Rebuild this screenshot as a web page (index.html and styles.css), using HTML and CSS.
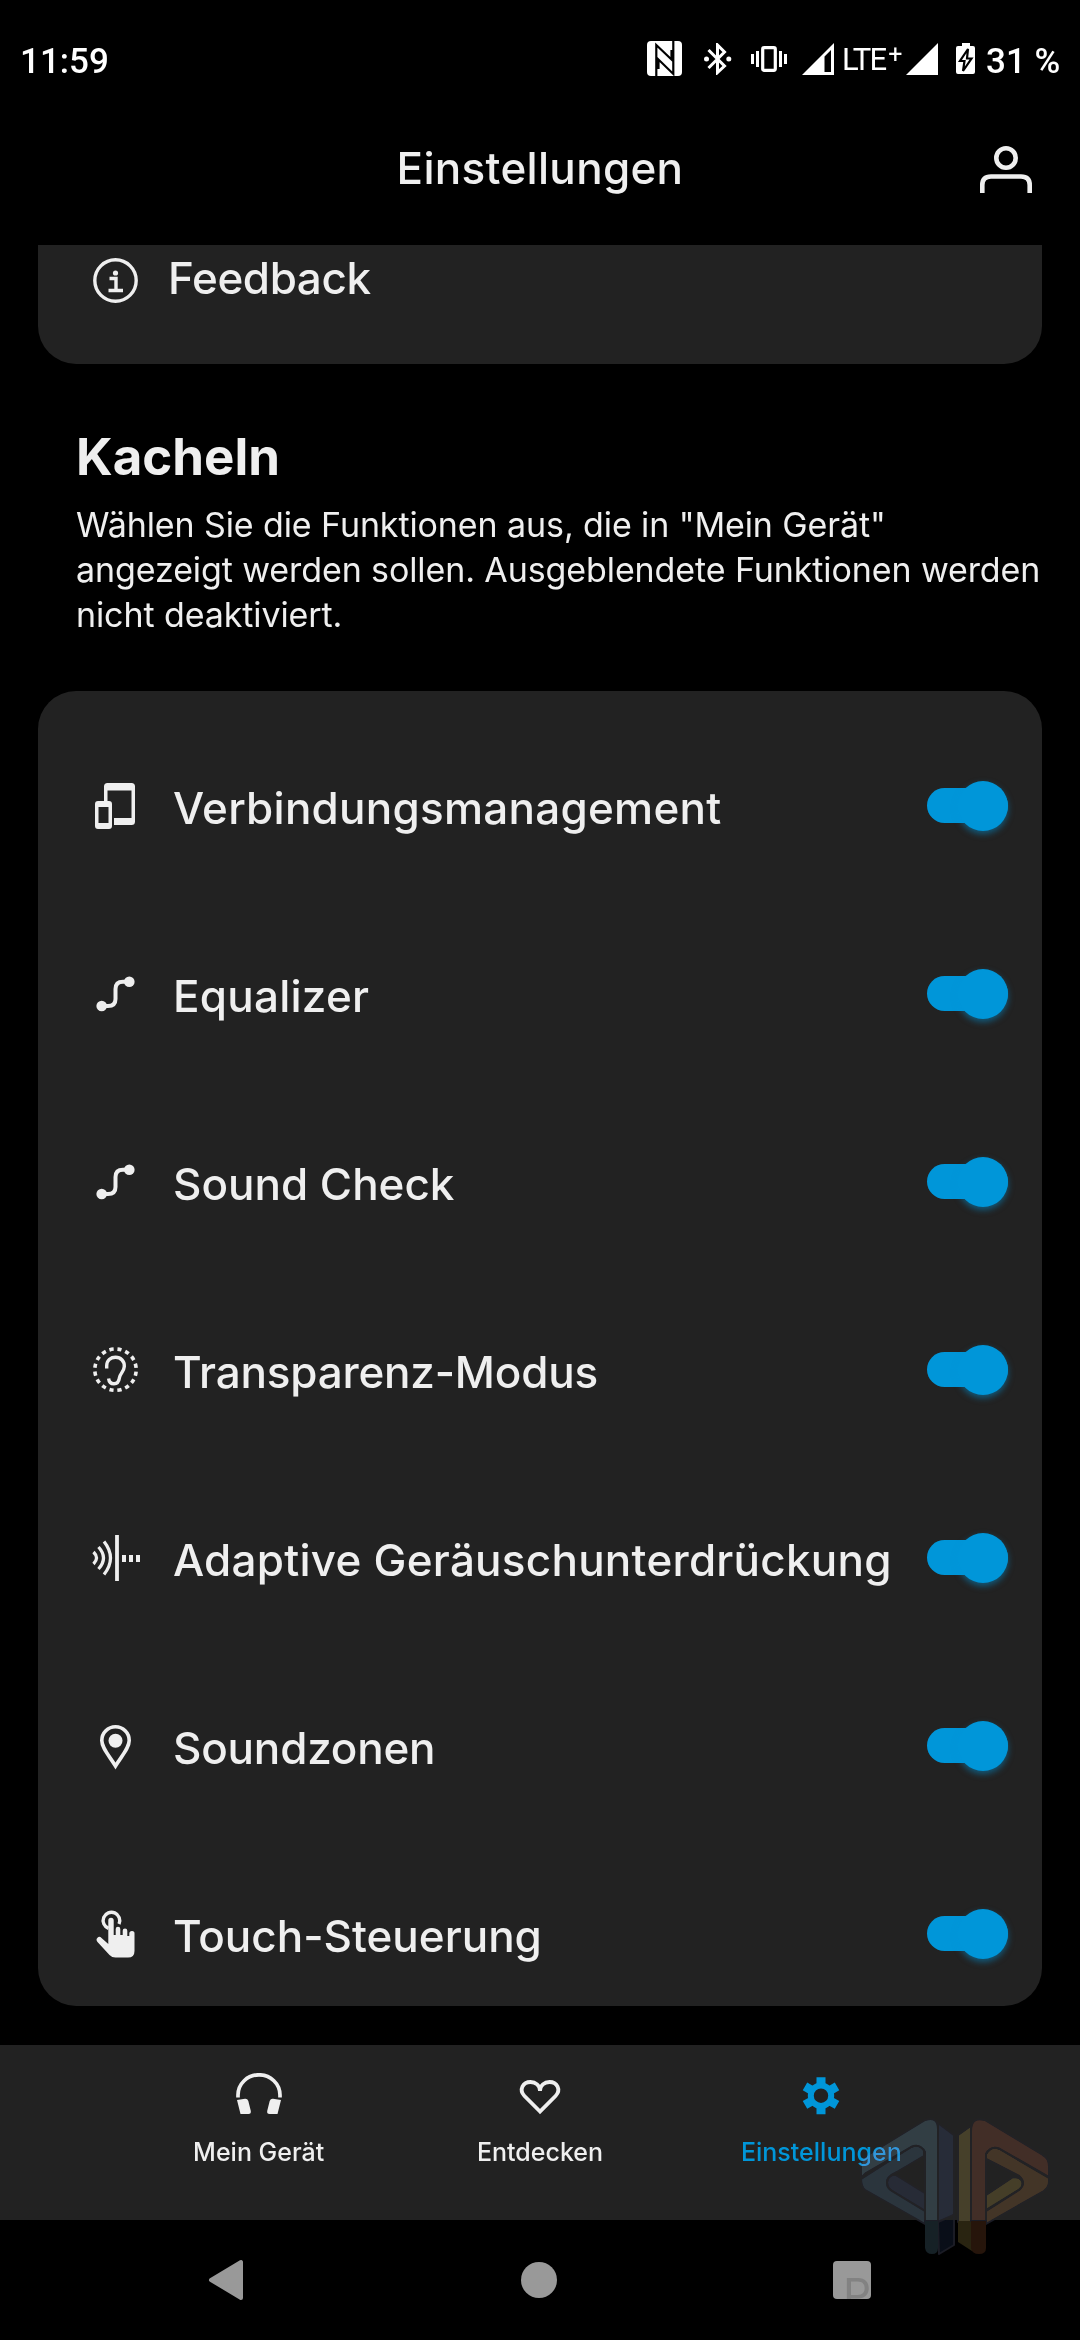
FILE: index.html
```html
<!DOCTYPE html>
<html lang="de">
<head>
    <meta charset="UTF-8">
    <meta name="viewport" content="width=device-width, initial-scale=1.0">
    <title>Einstellungen</title>
    <link rel="stylesheet" href="styles.css">
</head>
<body>

    <!-- Status bar -->
    <div class="statusbar">
        <span class="time">11:59</span>
        <div class="status-icons">
            <svg class="nfc" width="36" height="36" viewBox="0 0 36 36">
                <rect x="0" y="0" width="35" height="35" rx="4" fill="#fff"/>
                <path d="M9.300 35V4L24.500 18.500V9M26.300 0V33L11.500 18.500V28" fill="none" stroke="#000" stroke-width="2.200"/>
            </svg>
            <svg class="bt" width="28" height="32" viewBox="0 0 28 32">
                <path d="M4.500 7L20.500 23L13.500 29.500V2L20.500 9L4.500 25" fill="none" stroke="#fff" stroke-width="3"/>
                <circle cx="2.500" cy="16" r="2.500" fill="#fff"/>
                <circle cx="24.800" cy="16" r="2.500" fill="#fff"/>
            </svg>
            <svg class="vibrate" width="36" height="26" viewBox="0 0 36 26">
                <rect x="11.700" y="1.700" width="12.600" height="22.600" rx="1.500" fill="none" stroke="#fff" stroke-width="3.200"/>
                <path d="M1.500 8V18M6.500 5V21M29.500 5V21M34.500 8V18" stroke="#fff" stroke-width="3"/>
            </svg>
            <svg class="signal" width="32" height="32" viewBox="0 0 32 32">
                <path d="M0 32L32 0V32ZM22.500 13.500V29H29V7Z" fill="#fff" fill-rule="evenodd"/>
            </svg>
            <span class="lte">LTE<span class="plus">+</span></span>
            <svg class="signal2" width="32" height="32" viewBox="0 0 32 32">
                <path d="M0 32L32 0V32Z" fill="#fff"/>
            </svg>
            <svg class="battery" width="20" height="32" viewBox="0 0 20 32">
                <path d="M6 0H14V3H17Q19 3 19 5V29Q19 31 17 31H2Q0 31 0 29V5Q0 3 2 3H6Z" fill="#fff"/>
                <path d="M12 6L4 18H8.500L7 28L15.500 15.500H11Z" fill="#fff" stroke="#000" stroke-width="2.200"/>
            </svg>
            <span class="percent">31 %</span>
        </div>
    </div>

    <!-- Header -->
    <header class="header">
        <h1>Einstellungen</h1>
        <svg class="profile" width="52" height="48" viewBox="0 0 52 48">
            <g fill="none" stroke="#efefef" stroke-width="4.600">
                <circle cx="26" cy="12" r="9.700"/>
                <path d="M2.300 47V39Q2.300 30.500 11 30.500H41Q49.700 30.500 49.700 39V47"/>
            </g>
        </svg>
    </header>

    <main class="content">
        <div class="card feedback">
            <svg class="icon" viewBox="0 0 46 46">
                <circle cx="22.500" cy="22.500" r="20.700" fill="none" stroke="#efefef" stroke-width="3.400"/>
                <circle cx="22.500" cy="15" r="2.600" fill="#efefef"/>
                <path d="M16.500 20.500H23V32M15.500 32.500H30" fill="none" stroke="#efefef" stroke-width="3.400"/>
            </svg>
            <span class="label">Feedback</span>
        </div>

        <section class="intro">
            <h2>Kacheln</h2>
            <p>Wählen Sie die Funktionen aus, die in "Mein Gerät"<br>angezeigt werden sollen. Ausgeblendete Funktionen werden<br>nicht deaktiviert.</p>
        </section>

        <div class="card tiles">
            <div class="row">
                <svg class="icon" viewBox="0 0 46 46">
                    <path d="M11 18V3.500Q11 0 14.500 0H38.500Q42 0 42 3.500V38.500Q42 42 38.500 42H21V35H38.500V7.500H14.500V18Z" fill="#efefef"/>
                    <path d="M5 18H16Q19 18 19 21V43Q19 46 16 46H5Q2 46 2 43V21Q2 18 5 18ZM5.500 24V40H15.500V24Z" fill="#efefef" fill-rule="evenodd"/>
                </svg>
                <span class="label wide">Verbindungsmanagement</span>
                <span class="toggle"></span>
            </div>
            <div class="row">
                <svg class="icon" viewBox="0 0 46 46">
                    <path d="M8.700 35H15Q22.500 35 22.500 28V18Q22.500 10.700 30 10.700H36.300" fill="none" stroke="#efefef" stroke-width="4"/>
                    <circle cx="8.700" cy="35" r="5.300" fill="#efefef"/>
                    <circle cx="36.300" cy="10.700" r="5.300" fill="#efefef"/>
                </svg>
                <span class="label wide">Equalizer</span>
                <span class="toggle"></span>
            </div>
            <div class="row">
                <svg class="icon" viewBox="0 0 46 46">
                    <path d="M8.700 35H15Q22.500 35 22.500 28V18Q22.500 10.700 30 10.700H36.300" fill="none" stroke="#efefef" stroke-width="4"/>
                    <circle cx="8.700" cy="35" r="5.300" fill="#efefef"/>
                    <circle cx="36.300" cy="10.700" r="5.300" fill="#efefef"/>
                </svg>
                <span class="label">Sound Check</span>
                <span class="toggle"></span>
            </div>
            <div class="row">
                <svg class="icon" viewBox="0 0 46 46">
                    <g fill="none" stroke="#efefef">
                        <circle cx="22.500" cy="22.700" r="20.700" stroke-width="3.600" pathLength="16" stroke-dasharray=".52 .48" transform="rotate(5.400 22.500 22.700)"/>
                        <path d="M13.700 21.500V18.500C14 13 18 10.300 22.500 10.300C28 10.300 31.600 14.500 31.300 19.500C31 24.500 27.500 26 26.500 30.500C26 34 24.500 36.800 21 36.800C18 36.800 16 35 15.600 31.500" stroke-width="3.400"/>
                    </g>
                </svg>
                <span class="label tight">Transparenz-Modus</span>
                <span class="toggle"></span>
            </div>
            <div class="row">
                <svg class="icon" viewBox="0 0 46 46">
                    <g fill="none" stroke="#efefef">
                        <path d="M24 0V46" stroke-width="3.800"/>
                        <path d="M.5 17Q6.500 23 .5 29M5.500 12Q15.500 23 5.500 34M11 6.500Q24 23 11 39.500" stroke-width="3.200"/>
                        <path d="M29 23.500H33M36 23.500H40M43 23.500H47" stroke-width="6.800"/>
                    </g>
                </svg>
                <span class="label wide">Adaptive Geräuschunterdrückung</span>
                <span class="toggle"></span>
            </div>
            <div class="row">
                <svg class="icon" viewBox="0 0 46 46">
                    <path d="M22.500 43C16 32.500 8.800 25 8.800 17.500A13.700 13.700 0 0 1 36.200 17.500C36.200 25 29 32.500 22.500 43Z" fill="none" stroke="#efefef" stroke-width="3.600"/>
                    <circle cx="22.500" cy="17.800" r="7" fill="#efefef"/>
                </svg>
                <span class="label tight">Soundzonen</span>
                <span class="toggle"></span>
            </div>
            <div class="row">
                <svg class="icon" viewBox="0 0 46 46">
                    <path d="M15.500 17.300A8.300 8.300 0 1 1 26 13" fill="none" stroke="#efefef" stroke-width="3.400"/>
                    <path d="M15.300 33V9.500Q15.300 6.700 18 6.700T20.700 9.500V24H22.700V18Q22.700 15.700 25 15.700T27.300 18V24H29.700V19.700Q29.700 17.500 32 17.500T34.300 19.700V25H36.300V22.500Q36.300 20 39 20T41.500 22.500V40Q41.500 46.600 35 46.600H22.500Q19 46.600 16.500 44L4.500 31Q2.500 28.500 4.500 26.700T8.500 27Z" fill="#efefef"/>
                </svg>
                <span class="label">Touch-Steuerung</span>
                <span class="toggle"></span>
            </div>
        </div>
    </main>

    <!-- Tab bar -->
    <nav class="tabs">
        <a class="tab">
            <svg width="46" height="42" viewBox="0 0 46 42">
                <path d="M2 24.500V22A21 20.200 0 0 1 44 22V24.500" fill="none" stroke="#efefef" stroke-width="3.700"/>
                <path d="M1 27L9 25.700Q11.500 25.500 12.300 28L14.800 38Q15.300 41 12.500 41H4.500Z" fill="#efefef"/>
                <path d="M45 27L37 25.700Q34.500 25.500 33.700 28L31.200 38Q30.700 41 33.500 41H41.500Z" fill="#efefef"/>
            </svg>
            <span>Mein Gerät</span>
        </a>
        <a class="tab">
            <svg width="46" height="42" viewBox="0 0 46 42">
                <path d="M23 38.500L7.500 23C1.500 16.500 6 9 13.500 9C18.500 9 23 12.500 23 18C23 12.500 27.500 9 32.500 9C40 9 44.500 16.500 38.500 23Z" fill="none" stroke="#efefef" stroke-width="3.800"/>
            </svg>
            <span>Entdecken</span>
        </a>
        <a class="tab active">
            <svg width="46" height="42" viewBox="0 0 46 42">
                <g fill="none" stroke="#0096d9">
                    <circle cx="23" cy="22.700" r="10.200" stroke-width="6"/>
                    <path d="M23 4.200V12M23 33.400V41.200" stroke-width="9"/>
                    <path d="M23 4.200V12M23 33.400V41.200" stroke-width="9" transform="rotate(60 23 22.700)"/>
                    <path d="M23 4.200V12M23 33.400V41.200" stroke-width="9" transform="rotate(120 23 22.700)"/>
                </g>
            </svg>
            <span>Einstellungen</span>
        </a>
    </nav>

    <!-- System navigation -->
    <div class="sysnav">
        <svg width="36" height="42" viewBox="0 0 36 42">
            <path d="M3 21L33 3V39Z" fill="#999" stroke="#999" stroke-width="4" stroke-linejoin="round"/>
        </svg>
        <span class="home"></span>
        <span class="recent"><span>P</span></span>
    </div>

    <!-- Logo over the bottom right corner -->
    <svg class="logo" width="196" height="142" viewBox="0 0 196 142">
        <g stroke-linejoin="round" stroke="#1b1c25" stroke-width="2">
            <path d="M79 6L95 18V98L79 108Z" fill="#272c38"/>
            <path d="M79 105L95 98V128L80 137Z" fill="#090e18"/>
            <path d="M28 66Q28 56 37 58L66 76V94L33 74Q28 71 28 66Z" fill="#272b36"/>
            <path d="M2 62L52 30Q60 26 65 33V39L38 55Q27 60 28 66Q28 71 33 74L66 94V107L6 73Q2 70 2 62Z" fill="#2b353d"/>
            <path d="M2 61V48Q2 42 7 39L66 3Q79 -1 79 12V104H66V35Q61 26 52 30L7 56Z" fill="#323e44"/>
            <path d="M66 104H79V131Q79 137 73 137T66 131Z" fill="#162126" stroke="none"/>
            <path d="M99 18L113 8V105H99Z" fill="#46402a"/>
            <path d="M99 104H113V134L99 125Z" fill="#292411" stroke="none"/>
            <path d="M127 78L154 60Q166 60 163 71L127 93Z" fill="#453e28"/>
            <path d="M127 42V37Q132 28 141 32L190 61Q191 70 185 74L127 107V94L160 73Q168 66 160 59Z" fill="#433527"/>
            <path d="M112 104V14Q112 -1 126 3L184 38Q190 41 190 49V60L141 32Q132 28 127 37V104Z" fill="#422e27"/>
            <path d="M112 104H127V131Q127 137 120 137T112 131Z" fill="#26150b" stroke="none"/>
        </g>
    </svg>

</body>
</html>
```
FILE: styles.css
```css
body {
    margin: 0;
    width: 1080px;
    height: 2340px;
    position: relative;
    display: flex;
    flex-direction: column;
    overflow: hidden;
    background: #000;
    color: #efefef;
    font-family: Inter, Roboto, sans-serif;
}
svg {
    display: block;
    flex: none;
}

/* Status bar */
.statusbar {
    height: 118px;
    box-sizing: border-box;
    padding: 0 21px 0 20px;
    display: flex;
    align-items: center;
    justify-content: space-between;
    color: #fff;
    font-family: Roboto, sans-serif;
    font-size: 35px;
    font-weight: 500;
    white-space: nowrap;
}
.time {
    padding-top: 4px;
}
.status-icons {
    display: flex;
    align-items: center;
}
.bt {
    margin-left: 21px;
}
.vibrate {
    margin-left: 19px;
}
.signal {
    margin-left: 15px;
}
.lte {
    width: 64px;
    margin-left: 8px;
    font-size: 31px;
    font-weight: 400;
    letter-spacing: -1.8px;
}
.plus {
    font-size: 25px;
    position: relative;
    top: -7px;
    margin-left: 3px;
}
.battery {
    margin-left: 18px;
}
.percent {
    width: 73px;
    margin-left: 10px;
    padding-top: 4px;
}

/* Header */
.header {
    height: 127px;
    display: flex;
    justify-content: center;
    position: relative;
}
.header h1 {
    margin: 23px 0 0;
    font-size: 44px;
    line-height: 54px;
    font-weight: 500;
    letter-spacing: 0.3px;
}
.profile {
    position: absolute;
    top: 28px;
    right: 48px;
}

/* Content */
.content {
    height: 1800px;
    padding: 0 38px;
}
.card {
    background: #222;
    overflow: hidden;
}
.icon {
    width: 46px;
    height: 46px;
    overflow: visible;
}
.label {
    font-size: 44px;
    line-height: 54px;
    font-weight: 500;
    white-space: nowrap;
}
.label.wide {
    letter-spacing: 0.25px;
}
.label.tight {
    letter-spacing: -0.2px;
}
.feedback {
    height: 119px;
    box-sizing: border-box;
    padding: 6px 55px 0;
    border-radius: 0 0 38px 38px;
    display: flex;
    align-items: flex-start;
}
.feedback .icon {
    margin-top: 7px;
}
.feedback .label {
    margin-left: 29px;
    letter-spacing: -0.4px;
}
.intro {
    height: 327px;
    padding-left: 38px;
}
.intro h2 {
    margin: 0;
    padding-top: 63px;
    font-size: 51px;
    line-height: 60px;
    font-weight: 700;
}
.intro p {
    margin: 15px 0 0;
    font-size: 34px;
    line-height: 45px;
    letter-spacing: -0.1px;
    white-space: nowrap;
}
.tiles {
    height: 1315px;
    box-sizing: border-box;
    padding-top: 21px;
    border-radius: 38px;
}
.row {
    height: 188px;
    padding: 0 34px 0 55px;
    display: flex;
    align-items: center;
}
.row .label {
    margin-left: 34px;
    padding-top: 4px;
}

/* Toggle switch */
.toggle {
    width: 81px;
    height: 35px;
    margin: -1px 0 0 auto;
    border-radius: 18px;
    background: #0096d9;
    position: relative;
    flex: none;
}
.toggle::after {
    content: "";
    position: absolute;
    top: -7px;
    right: 0;
    width: 50px;
    height: 50px;
    border-radius: 50%;
    background: #0096d9;
    box-shadow: 0 3px 6px rgba(0, 150, 217, 0.5);
}

/* Tab bar */
.tabs {
    height: 175px;
    box-sizing: border-box;
    padding: 28px 118px 0;
    display: flex;
    background: #222;
}
.tab {
    flex: 1;
    display: flex;
    flex-direction: column;
    align-items: center;
    font-size: 25px;
    line-height: 30px;
    font-weight: 500;
}
.tab span {
    margin-top: 22px;
}
.tab.active {
    color: #0096d9;
}

/* System navigation */
.sysnav {
    height: 120px;
    box-sizing: border-box;
    padding: 0 209px 0 208px;
    display: flex;
    align-items: center;
    justify-content: space-between;
}
.home {
    width: 36px;
    height: 36px;
    margin-left: 1px;
    border-radius: 50%;
    background: #999;
}
.recent {
    width: 38px;
    height: 38px;
    border-radius: 4px;
    background: #999;
    overflow: hidden;
}
.recent span {
    display: block;
    margin: 11px 0 0 10px;
    font-size: 44px;
    line-height: 44px;
    color: #828282;
}

.logo {
    position: absolute;
    left: 859px;
    top: 2117px;
    mix-blend-mode: lighten;
}
```
